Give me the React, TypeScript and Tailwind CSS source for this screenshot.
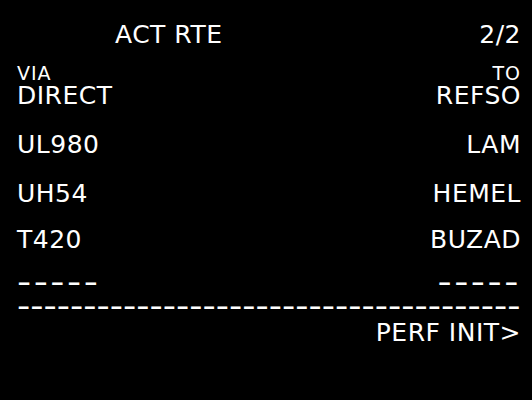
import React from 'react';

const rows = [
  { left: 'UL980', right: 'LAM', h: 'h-[49px]' },
  { left: 'UH54', right: 'HEMEL', h: 'h-[46px]' },
  { left: 'T420', right: 'BUZAD', h: 'h-[53px]' },
];

export default function App() {
  return (
    <div className="w-[532px] h-[400px] bg-black text-white overflow-hidden font-['DejaVu_Sans',sans-serif] pt-[22px] pl-[17px] pr-[11px]">
      {/* title line */}
      <div className="flex h-[42px] text-[25px] leading-[25px] tracking-[0.5px]">
        <span className="pl-[98px] flex-1">ACT RTE</span>
        <span>2/2</span>
      </div>

      {/* labels */}
      <div className="flex justify-between h-[19px] text-[19px] leading-[19px] tracking-[1px]">
        <span>VIA</span>
        <span>TO</span>
      </div>

      <div className="flex justify-between h-[49px] text-[25px] leading-[25px] tracking-[0.5px]">
        <span>DIRECT</span>
        <span>REFSO</span>
      </div>

      {rows.map(r => (
        <div key={r.left} className={`flex justify-between text-[25px] leading-[25px] tracking-[0.5px] ${r.h}`}>
          <span>{r.left}</span>
          <span>{r.right}</span>
        </div>
      ))}

      {/* empty entry */}
      <div className="flex justify-between h-[23px] text-[24px] leading-[10px] tracking-[1.5px] whitespace-nowrap">
        <span className="inline-block origin-left scale-x-[1.64] scale-y-[1.3]">-----</span>
        <span className="inline-block origin-right scale-x-[1.64] scale-y-[1.3]">-----</span>
      </div>

      {/* separator */}
      <div className="flex h-[17px] text-[24px] leading-[10px] whitespace-nowrap">
        <span className="inline-block origin-left scale-x-[1.53] scale-y-[1.3]">--------------------------------------</span>
      </div>

      <div className="flex justify-end text-[25px] leading-[25px] tracking-[0.5px]">
        <span>PERF INIT&gt;</span>
      </div>
    </div>
  );
}
